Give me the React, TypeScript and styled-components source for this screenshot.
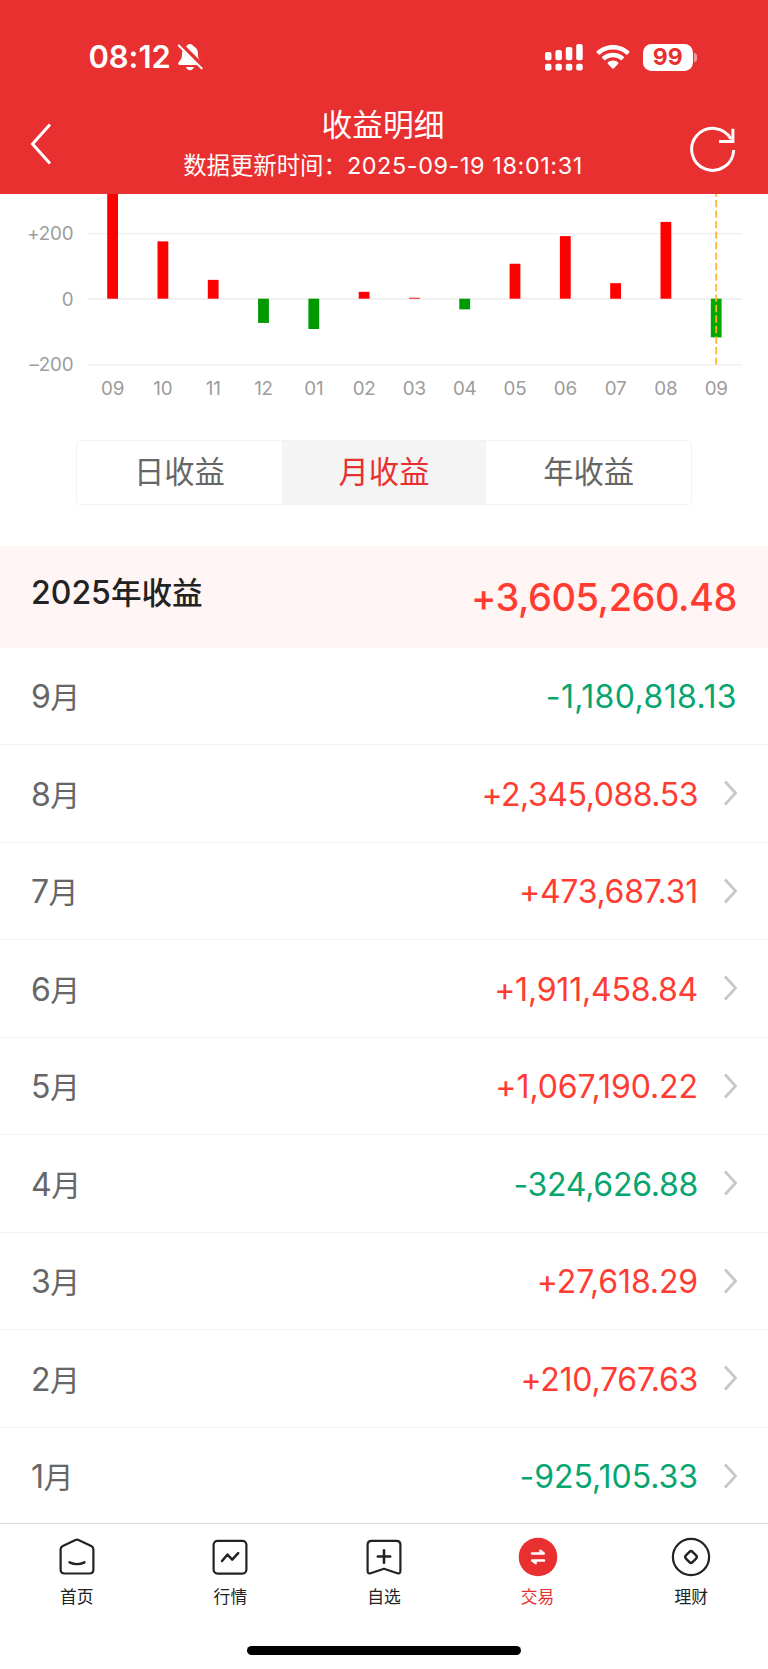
import React from "react";
import styled, { createGlobalStyle } from "styled-components";

const GlobalStyle = createGlobalStyle`
  * { box-sizing: border-box; }
  body { margin: 0; background: #fff; }
`;

const RED = "#e93030";
const UP = "#ff3b32";
const DOWN = "#07a56f";

const Screen = styled.div`
  width: 768px;
  height: 1669px;
  overflow: hidden;
  display: flex;
  flex-direction: column;
  background: #fff;
  font-family: Inter, "Noto Sans CJK SC", sans-serif;
  white-space: nowrap;
`;

const Header = styled.header`
  flex: none;
  height: 194.3px;
  background: ${RED};
  color: #fff;
`;

const StatusBar = styled.div`
  height: 96px;
  padding: 18px 71px 0 88.5px;
  display: flex;
  align-items: center;
  justify-content: space-between;
`;

const StatusGroup = styled.div`
  display: flex;
  align-items: center;
`;

const Clock = styled.span`
  font-size: 31px;
  font-weight: 600;
  letter-spacing: -0.1px;
  width: 88.5px;
  margin-bottom: 1px;
`;

const Battery = styled.div`
  width: 49.5px;
  height: 27px;
  margin-left: 13px;
  border-radius: 8.5px;
  background: #fff;
  color: ${RED};
  font-size: 23px;
  line-height: 27px;
  font-weight: 700;
  text-align: center;
`;

const BatteryTip = styled.div`
  width: 3px;
  height: 9px;
  margin-left: 1.5px;
  border-radius: 0 4px 4px 0;
  background: rgba(255, 255, 255, 0.5);
`;

const NavBar = styled.div`
  height: 98px;
  padding: 0 32px 0 30px;
  display: grid;
  grid-template-columns: 60px 1fr 60px;
`;

const BackButton = styled.div`
  padding-top: 26px;
`;

const RefreshButton = styled.div`
  padding-top: 29px;
  display: flex;
  justify-content: flex-end;
`;

const Heading = styled.div`
  display: flex;
  flex-direction: column;
  align-items: center;
`;

const Title = styled.h1`
  margin: 9px 0 0;
  font-size: 30.7px;
  line-height: 40px;
  font-weight: 400;
`;

const Updated = styled.div`
  margin-top: 6px;
  font-size: 23.4px;
  line-height: 30px;
`;

const Stamp = styled.span`
  letter-spacing: 0.6px;
`;

const ChartArea = styled.section`
  flex: none;
  height: 245.7px;
  svg { display: block; }
  text { font-size: 18.8px; letter-spacing: -0.2px; fill: #9c9c9c; }
`;

const Segmented = styled.div`
  flex: none;
  width: 616px;
  height: 64.6px;
  margin: 0 auto 41.4px;
  display: grid;
  grid-template-columns: repeat(3, 1fr);
  border: 1px solid #f2f2f2;
  border-radius: 4px;
  overflow: hidden;
`;

const Segment = styled.div<{ $active?: boolean }>`
  display: flex;
  align-items: center;
  justify-content: center;
  font-size: 30.3px;
  line-height: 40px;
  color: ${(p) => (p.$active ? RED : "#666")};
  background: ${(p) => (p.$active ? "#f4f4f4" : "#fff")};
`;

const Summary = styled.div`
  flex: none;
  height: 101.7px;
  padding: 0 31px;
  display: flex;
  align-items: center;
  justify-content: space-between;
  background: #fff5f4;
`;

const SummaryLabel = styled.span`
  margin-bottom: 8px;
  font-size: 32px;
  line-height: 40px;
  font-weight: 500;
  color: #222;
`;

const SummaryAmount = styled.span`
  font-size: 38px;
  line-height: 48px;
  font-weight: 500;
  letter-spacing: -0.48px;
  color: ${UP};
`;

const List = styled.div`
  flex: none;
  height: 875.8px;
  overflow: hidden;
`;

const Row = styled.div`
  height: 97.5px;
  padding: 3px 31px 0;
  display: flex;
  align-items: center;
  border-bottom: 1.5px solid #f3f3f3;
`;

const Month = styled.span`
  flex: 1;
  font-size: 32px;
  line-height: 40px;
  letter-spacing: -0.5px;
  color: #666;
`;

const Unit = styled.span<{ $size: number }>`
  font-size: ${(p) => p.$size}px;
`;

const Amount = styled.span<{ $down: boolean; $track: number }>`
  font-size: 32px;
  line-height: 40px;
  letter-spacing: ${(p) => p.$track}px;
  color: ${(p) => (p.$down ? DOWN : UP)};
`;

const ChevronSlot = styled.span`
  width: 39px;
  margin-bottom: 3px;
  display: flex;
  justify-content: flex-end;
`;

const TabBar = styled.nav`
  flex: 1;
  border-top: 1px solid #d8d8d8;
  display: flex;
  flex-direction: column;
  align-items: center;
  background: #fff;
`;

const Tabs = styled.div`
  width: 100%;
  height: 122px;
  padding-top: 12.3px;
  display: grid;
  grid-template-columns: repeat(5, 1fr);
`;

const Tab = styled.div<{ $active?: boolean }>`
  display: flex;
  flex-direction: column;
  align-items: center;
  gap: 7px;
  font-size: 16.8px;
  line-height: 26px;
  font-weight: 400;
  color: ${(p) => (p.$active ? RED : "#222")};
`;

const HomeIndicator = styled.div`
  width: 273.5px;
  height: 9px;
  border-radius: 5px;
  background: #000;
`;

const WifiSvg = styled.svg`
  margin-left: 13px;
`;

const BellOff = () => (
  <svg width="26" height="28" viewBox="0 0 26 28">
    <path d="M13 1c-2 0-3 1.2-3.3 2.2C6 4.6 5 8 5 11.5c0 4.500-1.500 5.500-3.200 7.500-1.200 1.500-.6 3 1 3h20.400c1.600 0 2.200-1.500 1-3-1.700-2-3.200-3-3.200-7.500 0-3.500-1-6.900-4.700-8.300C16 2.200 15 1 13 1zM9 24h8c-.5 2-2 3.200-4 3.200S9.500 26 9 24z" fill="#fff" />
    <path d="M2.500 0.500 26.500 24.500" stroke={RED} strokeWidth="5" />
    <path d="M1.800 2.500 24.700 25.400" stroke="#fff" strokeWidth="2" strokeLinecap="round" />
  </svg>
);

const signal = [
  [0, 8], [10.4, 6], [20.8, 3], [31.2, 0],
];

const Signal = () => (
  <svg width="38" height="27" viewBox="0 0 38 27">
    {signal.map(([x, y]) => (
      <g key={x} fill="#fff">
        <rect x={x} y={y} width="6.500" height={16.2 - y} rx="2" />
        <rect x={x} y="19.700" width="6.500" height="6.800" rx="2" />
      </g>
    ))}
  </svg>
);

const Wifi = () => (
  <WifiSvg width="34" height="26" viewBox="0 0 34 26" fill="#fff">
    <path d="M17 1C10.700 1 5 3.400 .7 7.300c-.4.4-.4.900 0 1.300l1.900 1.900c.4.400.9.400 1.300 0C7.400 7.300 12 5.500 17 5.500s9.600 1.800 13.100 5c.4.400.9.400 1.300 0l1.900-1.900c.4-.4.400-.9 0-1.300C29 3.400 23.300 1 17 1z" />
    <path d="M17 8.700c-4.100 0-7.900 1.500-10.800 4.100-.4.400-.4.900 0 1.300l2 2c.4.400.9.300 1.300 0 2-1.800 4.600-2.800 7.500-2.800s5.500 1 7.500 2.800c.4.300.9.400 1.300 0l2-2c.4-.4.400-.9 0-1.300C24.900 10.200 21.100 8.700 17 8.700z" />
    <path d="M17 16.600c-2 0-3.800.7-5.200 1.900-.4.400-.4.900 0 1.300l4.500 4.600c.4.400 1 .4 1.400 0l4.500-4.600c.4-.4.400-.9 0-1.300-1.400-1.200-3.200-1.900-5.200-1.900z" />
  </WifiSvg>
);

const BackIcon = () => (
  <svg width="22" height="44" viewBox="0 0 22 44" fill="none">
    <path d="M20 2.500 2.500 22 20 41.500" stroke="#fff" strokeWidth="3" />
  </svg>
);

const RefreshIcon = () => (
  <svg width="46" height="50" viewBox="0 0 46 50" fill="none" stroke="#fff" strokeWidth="3">
    <path d="M43.700 25A21 21 0 1 1 41 14" />
    <path d="M42.900 3.700v12.700H29" />
  </svg>
);

const Chevron = () => (
  <svg width="14" height="26" viewBox="0 0 14 26" fill="none">
    <path d="M2 1.600 12.600 13 2 24.400" stroke="#c8c8c8" strokeWidth="2.900" />
  </svg>
);

const bars = [
  { label: "09", value: 420 },
  { label: "10", value: 175 },
  { label: "11", value: 57.5 },
  { label: "12", value: -74 },
  { label: "01", value: -92.5 },
  { label: "02", value: 21 },
  { label: "03", value: 2.8 },
  { label: "04", value: -32.5 },
  { label: "05", value: 106.7 },
  { label: "06", value: 191.1 },
  { label: "07", value: 47.4 },
  { label: "08", value: 234.5 },
  { label: "09", value: -118.1 },
];

const ZERO = 104.7;
const SCALE = 0.3275;

const Chart = () => (
  <svg width="768" height="245" viewBox="0 0 768 245">
    {[39.6, 104.9, 170.9].map((y) => (
      <line key={y} x1="87.500" x2="742" y1={y} y2={y} stroke="#eee" strokeWidth={y === 104.9 ? 1.6 : 1.1} />
    ))}
    <text x="73.300" y="46" textAnchor="end">+200</text>
    <text x="73.300" y="111.500" textAnchor="end">0</text>
    <text x="73.300" y="177" textAnchor="end">–200</text>
    {bars.map(({ label, value }, i) => {
      const x = 112.6 + i * 50.3;
      const h = Math.abs(value) * SCALE;
      return (
        <g key={i}>
          <rect
            x={x - 5.4}
            y={value > 0 ? ZERO - h : ZERO}
            width="10.800"
            height={h}
            fill={value > 0 ? "#f00" : i === 12 ? "#00a800" : "#009900"}
          />
          <text x={x} y="200.500" textAnchor="middle">{label}</text>
        </g>
      );
    })}
    <line x1="716.200" x2="716.200" y1="-4.500" y2="170.500" stroke="#fdb32f" strokeWidth="1.700" strokeDasharray="7.200 3.300" />
  </svg>
);

const months = [
  { month: 9, amount: "-1,180,818.13", track: 0.4 },
  { month: 8, amount: "+2,345,088.53", track: -0.45 },
  { month: 7, amount: "+473,687.31", track: -0.25 },
  { month: 6, amount: "+1,911,458.84", track: -0.2 },
  { month: 5, amount: "+1,067,190.22", track: -0.08 },
  { month: 4, amount: "-324,626.88", track: -0.25 },
  { month: 3, amount: "+27,618.29", track: -0.15 },
  { month: 2, amount: "+210,767.63", track: -0.25 },
  { month: 1, amount: "-925,105.33", track: -0.03 },
];

const iconProps = {
  width: 40,
  height: 40,
  viewBox: "0 0 40 40",
  fill: "none",
  stroke: "currentColor",
  strokeWidth: 2.2,
  strokeLinecap: "round" as const,
  strokeLinejoin: "round" as const,
};

const tabs = [
  {
    label: "首页",
    icon: (
      <svg {...iconProps}>
        <path d="M18.500 2.900 5.800 8.900Q3.600 10 3.600 12.300V32.500Q3.600 36.500 7.600 36.500H32.400Q36.400 36.500 36.400 32.500V12.300Q36.400 10 34.200 8.900L21.500 2.900Q20 2.200 18.500 2.900Z" />
        <path d="M12.500 25.300Q20 29 27.500 25.300" strokeWidth="2.400" />
      </svg>
    ),
  },
  {
    label: "行情",
    icon: (
      <svg {...iconProps}>
        <rect x="3.600" y="3.800" width="32.800" height="32.800" rx="4" />
        <path d="M12 24 17.500 17.500 22.200 22.600 28.200 16.200" strokeWidth="2.500" />
      </svg>
    ),
  },
  {
    label: "自选",
    icon: (
      <svg {...iconProps}>
        <path d="M7.600 3.800H32.400Q36.400 3.800 36.400 7.800V34Q36.400 37.200 33.300 36.200L20 31.800 6.700 36.200Q3.600 37.200 3.600 34V7.800Q3.600 3.800 7.600 3.800Z" />
        <path d="M20 13.300V25.700M13.800 19.500H26.200" strokeWidth="2.600" />
      </svg>
    ),
  },
  {
    label: "交易",
    active: true,
    icon: (
      <svg {...iconProps}>
        <circle cx="20" cy="20" r="19.300" fill={RED} stroke="none" />
        <path d="M14 16.400H25.800L22.300 13.800M26 23.500H14.200L17.700 26.100" stroke="#fff" strokeWidth="2.500" />
      </svg>
    ),
  },
  {
    label: "理财",
    icon: (
      <svg {...iconProps}>
        <circle cx="20" cy="20" r="18.100" />
        <rect x="15.300" y="15.300" width="9.400" height="9.400" rx="2.200" transform="rotate(45 20 20)" strokeWidth="2.400" />
      </svg>
    ),
  },
];

export default function App() {
  return (
    <Screen>
      <GlobalStyle />
      <Header>
        <StatusBar>
          <StatusGroup>
            <Clock>08:12</Clock>
            <BellOff />
          </StatusGroup>
          <StatusGroup>
            <Signal />
            <Wifi />
            <Battery>99</Battery>
            <BatteryTip />
          </StatusGroup>
        </StatusBar>
        <NavBar>
          <BackButton>
            <BackIcon />
          </BackButton>
          <Heading>
            <Title>收益明细</Title>
            <Updated>
              数据更新时间：<Stamp>2025-09-19 18:01:31</Stamp>
            </Updated>
          </Heading>
          <RefreshButton>
            <RefreshIcon />
          </RefreshButton>
        </NavBar>
      </Header>
      <ChartArea>
        <Chart />
      </ChartArea>
      <Segmented>
        <Segment>日收益</Segment>
        <Segment $active>月收益</Segment>
        <Segment>年收益</Segment>
      </Segmented>
      <Summary>
        <SummaryLabel>
          2025<Unit $size={30.6}>年收益</Unit>
        </SummaryLabel>
        <SummaryAmount>+3,605,260.48</SummaryAmount>
      </Summary>
      <List>
        {months.map(({ month, amount, track }, i) => (
          <Row key={month}>
            <Month>
              {month}<Unit $size={30}>月</Unit>
            </Month>
            <Amount $down={amount.startsWith("-")} $track={track}>{amount}</Amount>
            {i > 0 && (
              <ChevronSlot>
                <Chevron />
              </ChevronSlot>
            )}
          </Row>
        ))}
      </List>
      <TabBar>
        <Tabs>
          {tabs.map(({ label, icon, active }) => (
            <Tab key={label} $active={active}>
              {icon}
              {label}
            </Tab>
          ))}
        </Tabs>
        <HomeIndicator />
      </TabBar>
    </Screen>
  );
}
